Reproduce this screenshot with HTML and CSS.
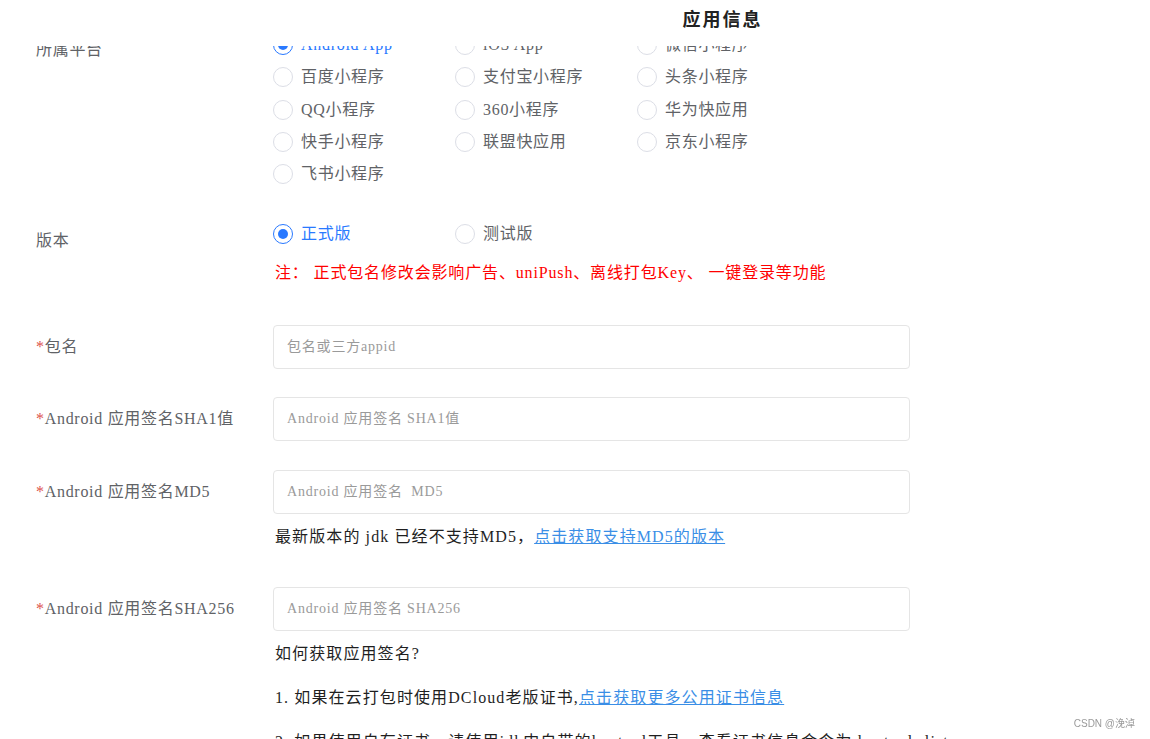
FILE: index.html
```html
<!DOCTYPE html>
<html lang="zh-CN">
<head>
    <meta charset="UTF-8">
    <meta name="viewport" content="width=device-width, initial-scale=1.0">
    <title>应用信息</title>
<link rel="stylesheet" href="styles.css">
</head>
<body>
    <div class="header">
        <h2 class="title">应用信息</h2>
    </div>

    <div class="form">
        <div class="form-item item-platform">
            <div class="form-label">所属平台</div>
            <div class="form-content radio-group">
                <label class="radio checked"><span class="radio-icon"></span>Android App</label>
                <label class="radio"><span class="radio-icon"></span>iOS App</label>
                <label class="radio"><span class="radio-icon"></span>微信小程序</label>
                <label class="radio"><span class="radio-icon"></span>百度小程序</label>
                <label class="radio"><span class="radio-icon"></span>支付宝小程序</label>
                <label class="radio"><span class="radio-icon"></span>头条小程序</label>
                <label class="radio"><span class="radio-icon"></span>QQ小程序</label>
                <label class="radio"><span class="radio-icon"></span>360小程序</label>
                <label class="radio"><span class="radio-icon"></span>华为快应用</label>
                <label class="radio"><span class="radio-icon"></span>快手小程序</label>
                <label class="radio"><span class="radio-icon"></span>联盟快应用</label>
                <label class="radio"><span class="radio-icon"></span>京东小程序</label>
                <label class="radio"><span class="radio-icon"></span>飞书小程序</label>
            </div>
        </div>

        <div class="form-item item-version">
            <div class="form-label">版本</div>
            <div class="form-content">
                <div class="radio-group">
                    <label class="radio checked"><span class="radio-icon"></span>正式版</label>
                    <label class="radio"><span class="radio-icon"></span>测试版</label>
                </div>
                <p class="note">注： 正式包名修改会影响广告、uniPush、离线打包Key、 一键登录等功能</p>
            </div>
        </div>

        <div class="form-item item-input">
            <div class="form-label"><span class="required">*</span>包名</div>
            <div class="form-content">
                <input class="text-input" type="text" placeholder="包名或三方appid">
            </div>
        </div>

        <div class="form-item item-input">
            <div class="form-label"><span class="required">*</span>Android 应用签名SHA1值</div>
            <div class="form-content">
                <input class="text-input" type="text" placeholder="Android 应用签名 SHA1值">
            </div>
        </div>

        <div class="form-item item-input item-md5">
            <div class="form-label"><span class="required">*</span>Android 应用签名MD5</div>
            <div class="form-content">
                <input class="text-input" type="text" placeholder="Android 应用签名  MD5">
                <p class="help">最新版本的 jdk 已经不支持MD5，<a href="#">点击获取支持MD5的版本</a></p>
            </div>
        </div>

        <div class="form-item item-input">
            <div class="form-label"><span class="required">*</span>Android 应用签名SHA256</div>
            <div class="form-content">
                <input class="text-input" type="text" placeholder="Android 应用签名 SHA256">
                <p class="help">如何获取应用签名?</p>
                <p class="help help-step">1. 如果在云打包时使用DCloud老版证书,<a href="#">点击获取更多公用证书信息</a></p>
                <p class="help help-step">2. 如果使用自有证书，请使用jdk中自带的keytool工具，查看证书信息命令为 keytool -list -v</p>
            </div>
        </div>
    </div>

    <div class="watermark">CSDN @浼淖</div>
</body>
</html>
```

FILE: styles.css
```css
:root {
    --label-color: #606266;
    --text-color: #1f1f1f;
    --primary: #2979ff;
    --link: #3a8ee6;
    --border: #e5e5e5;
    --radio-border: #dcdee6;
    --placeholder: #9a9a9a;
    --danger: #ff0000;
    --required: #dd524d;
}

html {
    overflow: hidden;
}

body {
    margin: 0;
    padding: 0;
    font-family: "Liberation Serif", "Noto Sans CJK SC", serif;
    font-size: 16px;
    letter-spacing: 0.7px;
    background-color: #ffffff;
    color: var(--text-color);
}

.header {
    position: fixed;
    top: 0;
    left: 0;
    right: 0;
    height: 46px;
    background-color: #ffffff;
    padding-left: 295px;
    text-align: center;
    z-index: 10;
}

.title {
    margin: 0;
    font-size: 18px;
    font-weight: bold;
    line-height: 40px;
    letter-spacing: 2px;
    color: #222222;
}

.form {
    padding: 29px 0 0 36px;
}

.form-item {
    display: flex;
    margin-bottom: 28px;
}

.form-label {
    width: 237px;
    flex-shrink: 0;
    line-height: 22px;
    color: var(--label-color);
}

.form-content {
    width: 637px;
}

.required {
    color: var(--required);
}

/* radios */
.radio-group {
    display: grid;
    grid-template-columns: repeat(3, 182px);
}

.radio {
    display: flex;
    align-items: center;
    height: 32.25px;
    line-height: 22px;
    color: var(--label-color);
    cursor: pointer;
}

.radio-icon {
    position: relative;
    box-sizing: border-box;
    width: 20px;
    height: 20px;
    margin-right: 8px;
    border: 1px solid var(--radio-border);
    border-radius: 50%;
    background-color: #ffffff;
}

.radio.checked {
    color: var(--primary);
}

.radio.checked .radio-icon {
    border: 1.5px solid var(--primary);
}

.radio.checked .radio-icon:after {
    content: "";
    position: absolute;
    top: 50%;
    left: 50%;
    width: 10px;
    height: 10px;
    margin: -5px 0 0 -5px;
    border-radius: 50%;
    background-color: var(--primary);
}

.item-platform .form-label {
    padding-top: 10px;
}

.item-version {
    margin-bottom: 41px;
}

.item-version .form-label {
    padding-top: 12px;
}

.note {
    margin: 11px 0 0 2px;
    line-height: 22px;
    letter-spacing: 0.85px;
    color: var(--danger);
}

/* text inputs */
.item-input {
    margin-bottom: 28.5px;
}

.item-input .form-label {
    padding-top: 11px;
}

.item-md5 {
    margin-bottom: 39px;
}

.text-input {
    display: block;
    box-sizing: border-box;
    width: 100%;
    height: 44px;
    margin: 0;
    padding: 0 13px;
    border: 1px solid var(--border);
    border-radius: 4px;
    font-family: "Liberation Serif", "Noto Sans CJK SC", serif;
    font-size: 14px;
    letter-spacing: 0.8px;
    color: var(--text-color);
    outline: none;
}

.text-input::placeholder {
    color: var(--placeholder);
}

.help {
    margin: 12px 0 0 2px;
    line-height: 22px;
    letter-spacing: 1.1px;
    color: var(--text-color);
    white-space: nowrap;
}

.help-step {
    margin-top: 22px;
}

.help a {
    color: var(--link);
    text-decoration: underline;
}

.watermark {
    position: fixed;
    right: 15px;
    bottom: 9px;
    font-family: "Liberation Sans", "Noto Sans CJK SC", sans-serif;
    font-size: 10px;
    letter-spacing: 0;
    color: #9a9a9a;
}
```
